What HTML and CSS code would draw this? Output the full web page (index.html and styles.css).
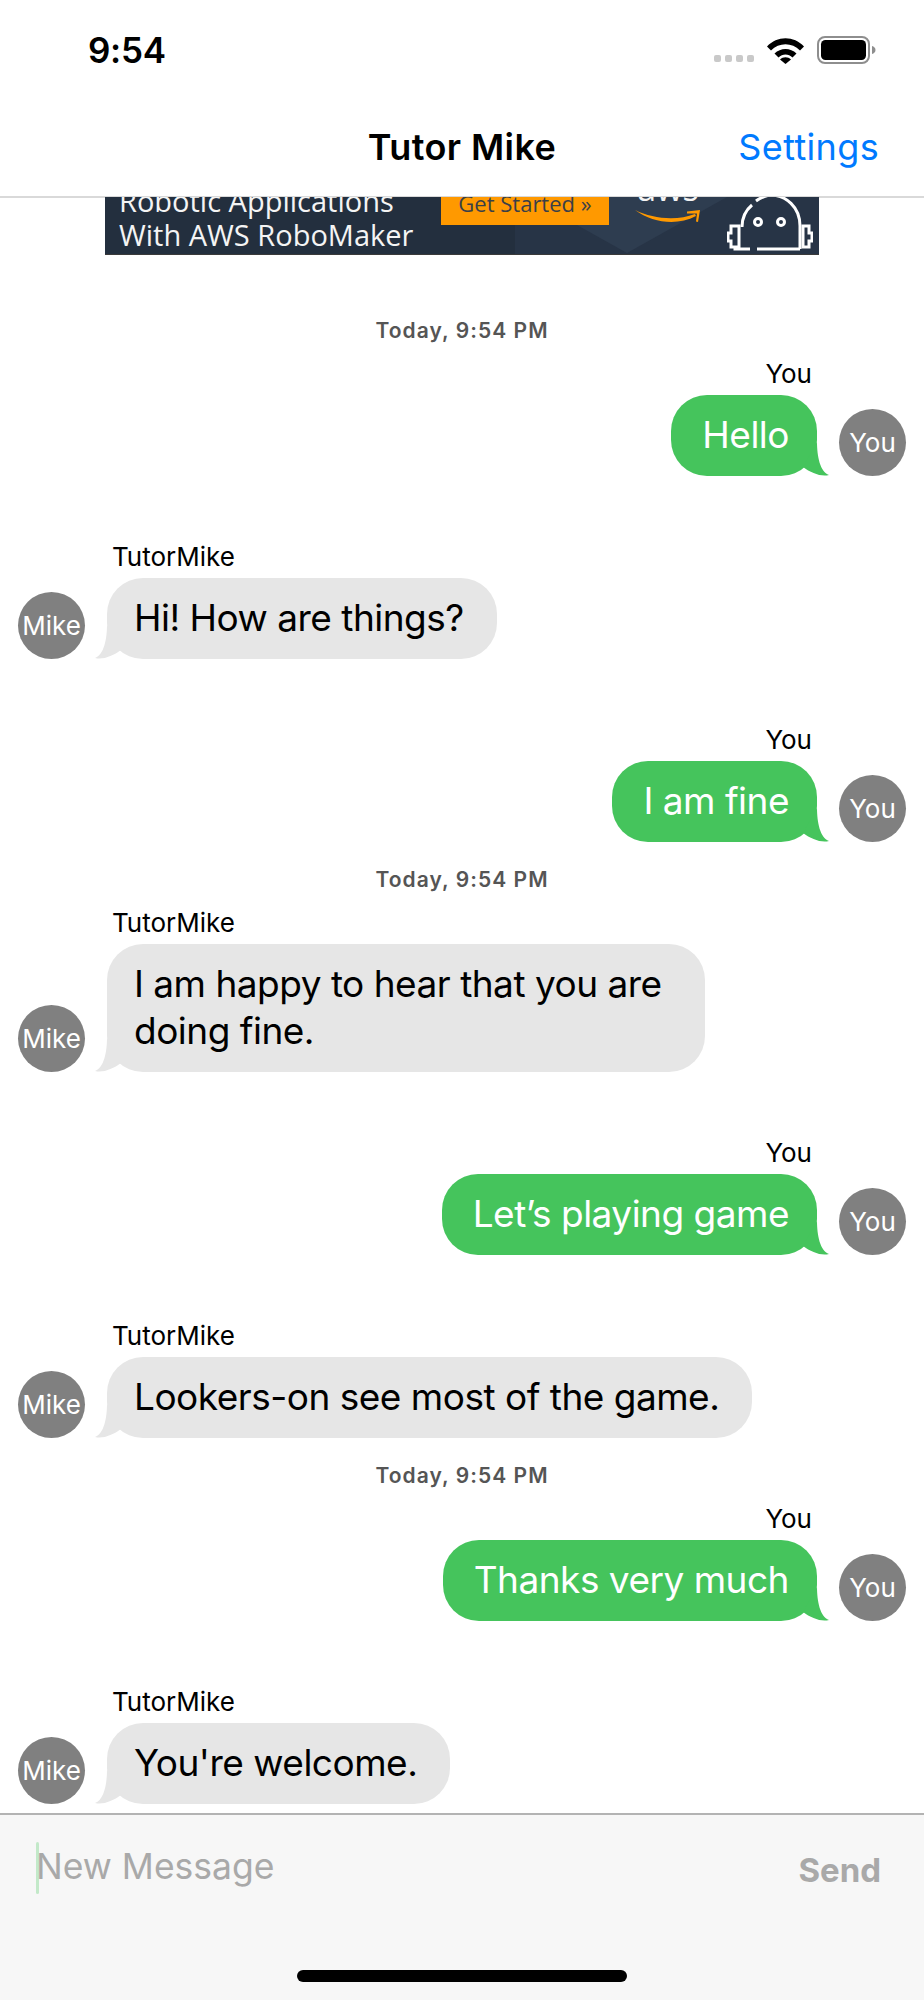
FILE: index.html
```html
<!DOCTYPE html>
<html lang="en">
<head>
<meta charset="utf-8">
<title>Tutor Mike</title>
<link rel="stylesheet" href="styles.css">
</head>
<body>
<div class="phone">
  <header class="top">
    <div class="status">
      <span class="time">9:54</span>
      <div class="status-icons">
        <div class="signal"><i></i><i></i><i></i><i></i></div>
        <svg class="wifi" width="37" height="27" viewBox="0 0 37 27"><path d="M0 9.5C10-1.5 27-1.5 37 9.5L33 13.5C25 5 12 5 4 13.5Z"/><path d="M7.5 16.5C13.500 10.500 23.500 10.500 29.500 16.500L25.500 20.500C21.500 16.500 15.500 16.500 11.500 20.500Z"/><path d="M13 22.500C16 19.500 21 19.500 24 22.500L18.500 27Z"/></svg>
        <svg class="battery" width="59" height="28" viewBox="0 0 59 28"><rect x="1" y="1" width="51" height="26" rx="7" fill="none" stroke="#8e8e8e" stroke-width="2"/><rect x="4" y="4" width="45" height="20" rx="4.500"/><path d="M55 10C57 10.500 58.500 12 58.500 14C58.500 16 57 17.500 55 18Z" fill="#8e8e8e"/></svg>
      </div>
    </div>
    <nav class="nav">
      <h1 class="title">Tutor Mike</h1>
      <a class="settings">Settings</a>
    </nav>
  </header>

  <div class="ad">
    <svg class="ad-bg" width="714" height="58" viewBox="0 0 714 58"><path d="M410 0H714V58H410Z" fill="#273446"/><path d="M472 28L522 56L622 0H430Z" fill="#2e3d50"/></svg>
    <div class="ad-copy">Robotic Applications<br>With AWS RoboMaker</div>
    <div class="ad-cta">Get Started »</div>
    <div class="ad-brand">
      <span class="ad-aws">aws</span>
      <svg class="ad-smile" width="66" height="15" viewBox="0 0 66 15"><path d="M0 1C18 10 42 12 60 5L61 7C42 17 18 14 0 1Z" fill="#f90"/><path d="M52 2.500L65 1L63 13L61 12.500L62 4.500L52 4.500Z" fill="#f90"/></svg>
    </div>
    <svg class="ad-robot" width="86" height="58" viewBox="0 0 86 58" fill="none" stroke="#fff" stroke-width="3"><path d="M15 30C15 20 19 13 25 8"/><path d="M29 4C33 1 38 -1 43 -2C59 -2 73 10 73 29V52"/><path d="M30 52H73"/><path d="M10 29H4V36H1V44H4V50H12V29Z"/><path d="M76 29H82V36H85V44H82V50H76Z"/><path d="M8 50V52H23"/><circle cx="31" cy="25" r="3.500"/><circle cx="54" cy="25" r="3.500"/></svg>
  </div>

  <main class="chat">
    <p class="stamp stamp-first">Today, 9:54 PM</p>
    <div class="msg out">
      <div class="col"><span class="name">You</span><div class="bubble">Hello<svg class="tail" width="30" height="34" viewBox="0 0 30 34"><path d="M18 0C18 14 21 30 30 33C22 35 12 31 4 25Z"/></svg></div></div>
      <div class="avatar">You</div>
    </div>
    <div class="msg in">
      <div class="avatar">Mike</div>
      <div class="col"><span class="name">TutorMike</span><div class="bubble">Hi! How are things?<svg class="tail" width="30" height="34" viewBox="0 0 30 34"><path d="M18 0C18 14 21 30 30 33C22 35 12 31 4 25Z"/></svg></div></div>
    </div>
    <div class="msg out">
      <div class="col"><span class="name">You</span><div class="bubble">I am fine<svg class="tail" width="30" height="34" viewBox="0 0 30 34"><path d="M18 0C18 14 21 30 30 33C22 35 12 31 4 25Z"/></svg></div></div>
      <div class="avatar">You</div>
    </div>
    <p class="stamp">Today, 9:54 PM</p>
    <div class="msg in after-stamp">
      <div class="avatar">Mike</div>
      <div class="col"><span class="name">TutorMike</span><div class="bubble bubble-multi">I am happy to hear that you are<br>doing fine.<svg class="tail" width="30" height="34" viewBox="0 0 30 34"><path d="M18 0C18 14 21 30 30 33C22 35 12 31 4 25Z"/></svg></div></div>
    </div>
    <div class="msg out">
      <div class="col"><span class="name">You</span><div class="bubble">Let’s playing game<svg class="tail" width="30" height="34" viewBox="0 0 30 34"><path d="M18 0C18 14 21 30 30 33C22 35 12 31 4 25Z"/></svg></div></div>
      <div class="avatar">You</div>
    </div>
    <div class="msg in">
      <div class="avatar">Mike</div>
      <div class="col"><span class="name">TutorMike</span><div class="bubble">Lookers-on see most of the game.<svg class="tail" width="30" height="34" viewBox="0 0 30 34"><path d="M18 0C18 14 21 30 30 33C22 35 12 31 4 25Z"/></svg></div></div>
    </div>
    <p class="stamp">Today, 9:54 PM</p>
    <div class="msg out after-stamp">
      <div class="col"><span class="name">You</span><div class="bubble">Thanks very much<svg class="tail" width="30" height="34" viewBox="0 0 30 34"><path d="M18 0C18 14 21 30 30 33C22 35 12 31 4 25Z"/></svg></div></div>
      <div class="avatar">You</div>
    </div>
    <div class="msg in">
      <div class="avatar">Mike</div>
      <div class="col"><span class="name">TutorMike</span><div class="bubble">You're welcome.<svg class="tail" width="30" height="34" viewBox="0 0 30 34"><path d="M18 0C18 14 21 30 30 33C22 35 12 31 4 25Z"/></svg></div></div>
    </div>
  </main>

  <footer class="composer">
    <div class="input-row">
      <div class="field"><span class="caret"></span><span class="placeholder">New Message</span></div>
      <span class="send">Send</span>
    </div>
    <div class="home"></div>
  </footer>
</div>
</body>
</html>
```
FILE: styles.css
```css
* { box-sizing: border-box; }
html, body { margin: 0; padding: 0; background: #fff; }
.phone {
  width: 924px;
  height: 2000px;
  display: flex;
  flex-direction: column;
  overflow: hidden;
  font-family: Inter, "Liberation Sans", sans-serif;
  color: #000;
}

/* top */
.top { height: 198px; border-bottom: 2px solid #d9d9d9; flex: none; background: #fff; }
.status { height: 100px; display: flex; justify-content: space-between; align-items: flex-start; padding: 0 48px 0 88px; }
.time { font-size: 35px; line-height: 40px; font-weight: 600; margin-top: 30px; letter-spacing: -0.3px; }
.status-icons { display: flex; align-items: flex-start; margin-top: 36px; }
.signal { display: flex; gap: 4px; margin-top: 19px; margin-right: 13px; }
.signal i { width: 7px; height: 7px; border-radius: 2px; background: #c9c9c9; display: block; }
.wifi { margin-top: 1px; margin-right: 13px; }
.nav { height: 96px; position: relative; display: flex; align-items: center; justify-content: center; }
.title { margin: 0; font-size: 36px; line-height: 44px; font-weight: 600; letter-spacing: 0.4px; margin-top: -2px; }
.settings { position: absolute; right: 45px; top: 25px; font-size: 36px; line-height: 44px; color: #007aff; letter-spacing: 0.35px; }

/* ad */
.ad {
  position: relative;
  flex: none;
  width: 714px;
  height: 58px;
  margin-left: 105px;
  margin-top: -1px;
  background: #232f3e;
  border-bottom: 1px solid #3a3a3a;
  overflow: hidden;
  display: flex;
  align-items: flex-end;
}
.ad-bg { position: absolute; left: 0; top: 0; }
.ad-copy {
  position: relative;
  width: 336px;
  padding-left: 14px;
  padding-bottom: 2px;
  font-family: "Open Sans", sans-serif;
  font-size: 29px;
  line-height: 34px;
  color: #f4f4f4;
  flex: none;
  white-space: nowrap;
}
.ad-cta {
  position: relative;
  align-self: flex-start;
  margin-top: -4px;
  width: 168px;
  height: 32px;
  background: #f90;
  color: #3a3f48;
  font-family: "Open Sans", sans-serif;
  font-size: 22px;
  line-height: 20px;
  text-align: center;
  flex: none;
}
.ad-brand { position: relative; align-self: flex-start; margin-left: 26px; width: 66px; flex: none; }
.ad-aws { display: block; margin-top: -24px; height: 30px; font-family: "Open Sans", sans-serif; font-size: 34px; line-height: 30px; color: #f4f4f4; text-align: center; }
.ad-smile { display: block; margin-top: 6px; }
.ad-robot { position: absolute; left: 622px; top: 0; }

/* chat */
.chat { flex: 1; min-height: 0; overflow: hidden; }
.stamp {
  margin: 0;
  height: 67px;
  padding-top: 28px;
  text-align: center;
  font-size: 21px;
  line-height: 20px;
  font-weight: 600;
  color: #555;
  letter-spacing: 1.05px;
}
.stamp-first { height: 105px; padding-top: 66px; }
.msg { display: flex; align-items: flex-end; gap: 22px; padding: 0 18px; margin-top: 67px; }
.after-stamp, .stamp-first + .msg { margin-top: 0; }
.msg.out { justify-content: flex-end; }
.col { display: flex; flex-direction: column; }
.out .col { align-items: flex-end; }
.in .col { align-items: flex-start; }
.name { font-size: 26px; line-height: 28px; height: 35px; }
.out .name { padding-right: 5px; }
.in .name { padding-left: 5px; }
.bubble {
  position: relative;
  font-size: 37px;
  line-height: 47px;
  letter-spacing: -0.5px;
  border-radius: 36px;
}
.out .bubble { background: #45c45c; color: #fff; padding: 16px 28px 18px 31px; }
.in .bubble { background: #e6e6e6; color: #000; padding: 16px 33px 18px 27px; }
.in .bubble-multi { padding-right: 43px; }
.tail { position: absolute; bottom: 0; display: block; }
.out .tail { right: -12px; fill: #45c45c; }
.in .tail { left: -12px; fill: #e6e6e6; transform: scaleX(-1); }
.avatar {
  width: 67px;
  height: 67px;
  flex: none;
  border-radius: 50%;
  background: #808080;
  color: #fff;
  font-size: 26px;
  display: flex;
  align-items: center;
  justify-content: center;
}

/* composer */
.composer { flex: none; height: 187px; background: #f7f7f7; border-top: 2px solid #b3b3b3; padding-top: 27px; display: flex; flex-direction: column; }
.input-row { display: flex; justify-content: space-between; align-items: flex-start; height: 128px; padding: 0 43px 0 36px; }
.field { display: flex; }
.caret { width: 3px; height: 52px; border-radius: 2px; background: #c3e9c9; flex: none; }
.placeholder { font-size: 35.500px; line-height: 50px; color: #a9a9a9; margin-left: -3px; }
.send { font-size: 33px; line-height: 40px; font-weight: 700; color: #a9a9a9; margin-top: 8px; }
.home { width: 330px; height: 12px; border-radius: 6px; background: #000; align-self: center; }
```
